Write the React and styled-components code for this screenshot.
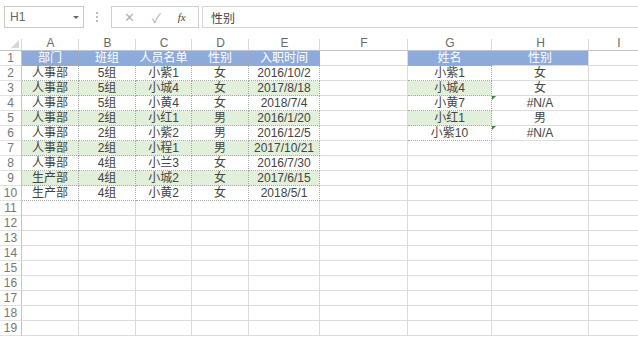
import React from 'react';
import styled, { createGlobalStyle } from 'styled-components';

const GlobalStyle = createGlobalStyle`
  html, body {
    margin: 0;
    padding: 0;
    background: #fff;
    overflow: hidden;
  }
  body {
    font-family: "Liberation Sans", "Noto Sans CJK SC", sans-serif;
  }
`;

const COLS = '22px 57px 57px 56px 57px 71px 88px 84px 97px 60px';

const Page = styled.div`
  width: 638px;
  height: 337px;
  overflow: hidden;
  background: #fff;
`;

const FormulaRow = styled.div`
  display: flex;
  align-items: center;
  height: 22px;
  padding: 6px 0 8px 4px;
`;

const NameBox = styled.div`
  box-sizing: border-box;
  width: 80px;
  height: 22px;
  border: 1px solid #c8c8c8;
  display: flex;
  align-items: center;
  justify-content: space-between;
  padding: 0 4px 0 5px;
  color: #666;
  font-size: 12px;
`;

const Caret = styled.span`
  width: 0;
  height: 0;
  border-left: 3px solid transparent;
  border-right: 3px solid transparent;
  border-top: 3px solid #666;
`;

const Grip = styled.div`
  width: 2px;
  height: 10px;
  margin: 0 11px 0 12px;
  border-left: 2px dotted #bbb;
`;

const ButtonBox = styled.div`
  box-sizing: border-box;
  width: 88px;
  height: 22px;
  border: 1px solid #d0d0d0;
  display: flex;
  align-items: center;
  justify-content: space-around;
  padding: 0 4px;
  color: #b0b0b0;
  font-size: 13px;
`;

const Fx = styled.span`
  font-family: "Liberation Serif", serif;
  font-style: italic;
  font-size: 11px;
  color: #444;
`;

const FormulaInput = styled.div`
  box-sizing: border-box;
  flex: 1;
  height: 22px;
  margin-left: 3px;
  border: 1px solid #d6d6d6;
  border-right: none;
  display: flex;
  align-items: center;
  padding-left: 8px;
  font-family: "Noto Sans CJK SC", sans-serif;
  font-size: 12px;
  color: #444;
`;

const HeaderRow = styled.div`
  display: grid;
  grid-template-columns: ${COLS};
  height: 14px;
  border-bottom: 1px solid #c4c4c4;
`;

const ColHead = styled.div`
  display: flex;
  align-items: flex-end;
  justify-content: center;
  font-size: 12px;
  color: #6a6a6a;
  position: relative;
  height: 14px;
  &::after {
    content: '';
    position: absolute;
    right: 0;
    top: 3px;
    bottom: 0;
    border-right: 1px solid #dadada;
  }
`;

const Corner = styled(ColHead)`
  &::before {
    content: '';
    position: absolute;
    right: 3px;
    bottom: 2px;
    border-left: 8px solid transparent;
    border-bottom: 8px solid #d8d8d8;
  }
`;

const Row = styled.div`
  display: grid;
  grid-template-columns: ${COLS};
  height: 15px;
`;

const RowNum = styled.div`
  box-sizing: border-box;
  height: 15px;
  border-right: 1px solid #c4c4c4;
  border-bottom: 1px solid #e2e2e2;
  display: flex;
  align-items: center;
  justify-content: center;
  font-size: 12px;
  color: #777;
`;

const fills = { blue: '#8eaadb', green: '#e2efda' };

const Cell = styled.div`
  box-sizing: border-box;
  height: 15px;
  position: relative;
  display: flex;
  align-items: center;
  justify-content: center;
  white-space: nowrap;
  font-family: "Liberation Sans", "Noto Sans CJK SC", sans-serif;
  font-size: 12px;
  line-height: 1;
  color: ${p => (p.$fill === 'blue' ? '#fff' : '#444')};
  background: ${p => fills[p.$fill] || 'transparent'};
  border-right: 1px ${p => (p.$dotted ? 'dotted #a8a8a8' : 'solid #dcdcdc')};
  border-bottom: 1px ${p => (p.$dotted ? 'dotted #a8a8a8' : 'solid #dcdcdc')};
`;

const ErrorMark = styled.span`
  position: absolute;
  left: 0;
  top: 0;
  border-right: 4px solid transparent;
  border-top: 4px solid #2e8b3a;
`;

const left = [
  ['部门', '班组', '人员名单', '性别', '入职时间'],
  ['人事部', '5组', '小紫1', '女', '2016/10/2'],
  ['人事部', '5组', '小城4', '女', '2017/8/18'],
  ['人事部', '5组', '小黄4', '女', '2018/7/4'],
  ['人事部', '2组', '小红1', '男', '2016/1/20'],
  ['人事部', '2组', '小紫2', '男', '2016/12/5'],
  ['人事部', '2组', '小程1', '男', '2017/10/21'],
  ['人事部', '4组', '小兰3', '女', '2016/7/30'],
  ['生产部', '4组', '小城2', '女', '2017/6/15'],
  ['生产部', '4组', '小黄2', '女', '2018/5/1'],
];

const right = [
  ['姓名', '性别'],
  ['小紫1', '女'],
  ['小城4', '女'],
  ['小黄7', '#N/A'],
  ['小红1', '男'],
  ['小紫10', '#N/A'],
];

const letters = ['A', 'B', 'C', 'D', 'E', 'F', 'G', 'H', 'I'];

function rowFill(i) {
  if (i === 0) return 'blue';
  if (i % 2 === 0) return 'green';
  return undefined;
}

export default function App() {
  const rows = [];
  for (let i = 0; i < 19; i++) {
    const l = left[i];
    const r = right[i];
    const f = rowFill(i);
    rows.push(
      <Row key={i}>
        <RowNum>{i + 1}</RowNum>
        {[0, 1, 2, 3, 4].map(c => (
          <Cell key={c} $fill={l ? f : undefined} $dotted={!!l}>
            {l ? l[c] : ''}
          </Cell>
        ))}
        <Cell />
        <Cell $fill={r ? (i === 0 ? 'blue' : i === 2 || i === 4 ? 'green' : undefined) : undefined} $dotted={!!r}>
          {r ? r[0] : ''}
        </Cell>
        <Cell $fill={i === 0 ? 'blue' : undefined}>
          {r && r[1] === '#N/A' && <ErrorMark />}
          {r ? r[1] : ''}
        </Cell>
        <Cell />
      </Row>
    );
  }

  return (
    <Page>
      <GlobalStyle />
      <FormulaRow>
        <NameBox>
          H1
          <Caret />
        </NameBox>
        <Grip />
        <ButtonBox>
          <span>✕</span>
          <span>✓</span>
          <Fx>fx</Fx>
        </ButtonBox>
        <FormulaInput>性别</FormulaInput>
      </FormulaRow>
      <HeaderRow>
        <Corner />
        {letters.map(l => (
          <ColHead key={l}>{l}</ColHead>
        ))}
      </HeaderRow>
      {rows}
    </Page>
  );
}
